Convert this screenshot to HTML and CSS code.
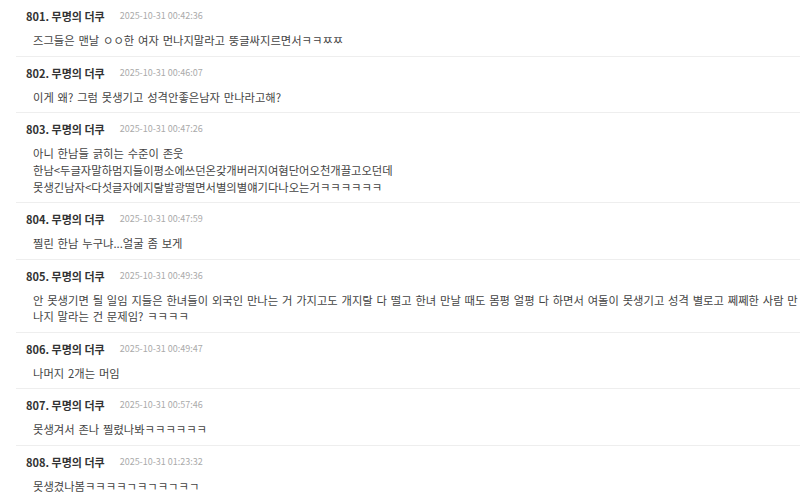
FILE: index.html
```html
<!DOCTYPE html>
<html>
<head>
    <title>무명의 더쿠 댓글</title>
    <meta charset="UTF-8">
    <meta name="viewport" content="width=device-width, initial-scale=1.0">
    <link rel="stylesheet" href="styles.css">
</head>
<body>
    <div class="comments">
        <div class="comment">
            <div class="meta"><span class="name">801. 무명의 더쿠</span><span class="date">2025-10-31 00:42:36</span></div>
            <div class="text">즈그들은 맨날 ㅇㅇ한 여자 먼나지말라고 뚱글싸지르면서ㅋㅋㅉㅉ</div>
        </div>
        <div class="comment">
            <div class="meta"><span class="name">802. 무명의 더쿠</span><span class="date">2025-10-31 00:46:07</span></div>
            <div class="text">이게 왜? 그럼 못생기고 성격안좋은남자 만나라고해?</div>
        </div>
        <div class="comment">
            <div class="meta"><span class="name">803. 무명의 더쿠</span><span class="date">2025-10-31 00:47:26</span></div>
            <div class="text">아니 한남들 긁히는 수준이 존웃<br>한남&lt;두글자말하멈지들이평소에쓰던온갖개버러지여혐단어오천개끌고오던데<br>못생긴남자&lt;다섯글자에지랄발광떨면서별의별얘기다나오는거ㅋㅋㅋㅋㅋㅋ</div>
        </div>
        <div class="comment">
            <div class="meta"><span class="name">804. 무명의 더쿠</span><span class="date">2025-10-31 00:47:59</span></div>
            <div class="text">찔린 한남 누구냐...얼굴 좀 보게</div>
        </div>
        <div class="comment">
            <div class="meta"><span class="name">805. 무명의 더쿠</span><span class="date">2025-10-31 00:49:36</span></div>
            <div class="text">안 못생기면 될 일임 지들은 한녀들이 외국인 만나는 거 가지고도 개지랄 다 떨고 한녀 만날 때도 몸평 얼평 다 하면서 여돌이 못생기고 성격 별로고 쩨쩨한 사람 만나지 말라는 건 문제임? ㅋㅋㅋㅋ</div>
        </div>
        <div class="comment">
            <div class="meta"><span class="name">806. 무명의 더쿠</span><span class="date">2025-10-31 00:49:47</span></div>
            <div class="text">나머지 2개는 머임</div>
        </div>
        <div class="comment">
            <div class="meta"><span class="name">807. 무명의 더쿠</span><span class="date">2025-10-31 00:57:46</span></div>
            <div class="text">못생겨서 존나 찔렸나봐ㅋㅋㅋㅋㅋㅋ</div>
        </div>
        <div class="comment">
            <div class="meta"><span class="name">808. 무명의 더쿠</span><span class="date">2025-10-31 01:23:32</span></div>
            <div class="text">못생겼나봄ㅋㅋㅋㅋㄱㅋㄱㅋㄱㅋㄱ</div>
        </div>
    </div>
</body>
</html>
```

FILE: styles.css
```css
body {
    margin: 0;
    background: #fff;
    font-family: "Noto Sans CJK KR", "Noto Sans", sans-serif;
    color: #333;
    overflow: hidden;
}
.comments {
    margin-left: 16px;
}
.comment {
    padding: 8px 0 6.75px 10px;
    border-bottom: 1px solid #eeeeee;
}
.meta {
    height: 16px;
    line-height: 16px;
    display: flex;
    align-items: center;
}
.name {
    font-size: 11px;
    font-weight: bold;
    color: #333;
}
.date {
    font-size: 9px;
    color: #aaa;
    margin-left: 15px;
}
.text {
    margin-top: 8px;
    padding-left: 7px;
    font-size: 11.3px;
    line-height: 16.75px;
    word-spacing: 1.3px;
    color: #444;
    word-break: break-all;
}
```
